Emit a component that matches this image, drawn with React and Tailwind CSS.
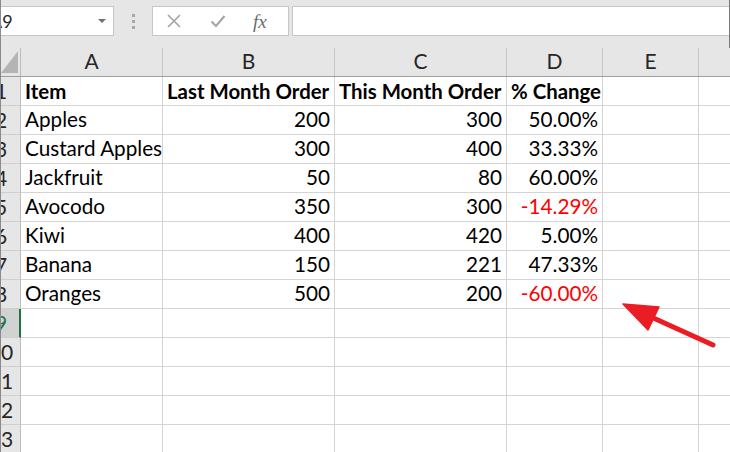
import React from "react";

const rows = [
  ["Item", "Last Month Order", "This Month Order", "% Change", true],
  ["Apples", "200", "300", "50.00%"],
  ["Custard Apples", "300", "400", "33.33%"],
  ["Jackfruit", "50", "80", "60.00%"],
  ["Avocodo", "350", "300", "-14.29%"],
  ["Kiwi", "400", "420", "5.00%"],
  ["Banana", "150", "221", "47.33%"],
  ["Oranges", "500", "200", "-60.00%"],
];

const cols = ["A", "B", "C", "D", "E", ""];

function RowHead({ n, active }) {
  return (
    <div
      className={
        "flex h-[29px] overflow-hidden items-end pb-[4px] border-b border-[#cfcfcf] text-[21px] " +
        (active
          ? "bg-[#d2d2d2] text-[#217346] border-r-2 border-r-[#217346]"
          : "bg-[#e6e6e6] text-[#262626] border-r border-r-[#bdbdbd]")
      }
    >
      <div className="flex-none w-[40px] -ml-[20px] text-center leading-none">{n}</div>
    </div>
  );
}

function Cell({ children, right, bold, red, last }) {
  return (
    <div
      className={
        "flex h-[29px] items-end pb-[4px] px-[4px] leading-none whitespace-nowrap overflow-visible border-b border-[#d4d4d4] " +
        (last ? "" : "border-r ") +
        (right ? "justify-end " : "justify-start ") +
        (bold ? "font-bold text-[20.4px] " : "text-[20.7px] ") +
        (red ? "text-[#ff0000]" : "text-black")
      }
    >
      {children}
    </div>
  );
}

export default function App() {
  const gridCols = "grid grid-cols-[20px_142px_172px_172px_96px_96px_1fr]";
  return (
    <div
      className="relative w-[730px] h-[452px] overflow-hidden bg-white border-l border-[#8a8a8a] text-[21px]"
      style={{ fontFamily: "Lato, 'Open Sans', sans-serif" }}
    >
      {/* Top formula bar */}
      <div className="flex h-[48px] bg-[#e6e6e6] border-r border-[#7a7a7a] pt-[6px] items-start">
        <div className="flex w-[113px] h-[30px] bg-white border border-[#c6c6c6] border-l-0 items-center overflow-hidden">
          <span className="flex-none -ml-[11px] text-[18px] text-[#262626] leading-none">A9</span>
          <div className="flex-1" />
          <svg width="8" height="4" viewBox="0 0 8 4" className="mr-[7px]">
            <path d="M0 0 L8 0 L4 4 Z" fill="#707070" />
          </svg>
        </div>
        <div className="flex flex-col w-[38px] items-center gap-[3px] pt-[8px]">
          <div className="w-[3px] h-[3px] bg-[#a8a8a8]" />
          <div className="w-[3px] h-[3px] bg-[#a8a8a8]" />
          <div className="w-[3px] h-[3px] bg-[#a8a8a8]" />
        </div>
        <div className="flex w-[137px] h-[30px] bg-white border border-[#c6c6c6] items-center">
          <svg width="16" height="16" viewBox="0 0 16 16" className="ml-[13px]">
            <path d="M2 2 L14 14 M14 2 L2 14" stroke="#a3a3a3" strokeWidth="1.6" fill="none" />
          </svg>
          <svg width="16" height="14" viewBox="0 0 16 14" className="ml-[28px]">
            <path d="M1.5 7.5 L6 12 L14.5 2" stroke="#a3a3a3" strokeWidth="2" fill="none" />
          </svg>
          <span
            className="ml-[27px] text-[19px] italic text-[#6a6a6a] leading-none"
            style={{ fontFamily: "'Liberation Serif', serif" }}
          >
            fx
          </span>
        </div>
        <div className="flex-1 h-[30px] ml-[3px] bg-white border border-[#c6c6c6] border-r-0" />
      </div>

      {/* Column headers */}
      <div className={gridCols + " h-[29px] bg-[#e6e6e6] border-b border-[#9d9d9d]"}>
        <div className="relative border-r border-[#bdbdbd] overflow-hidden">
          <svg width="17" height="22" viewBox="0 0 17 22" className="mt-[3px] ml-[0px]">
            <path d="M17 0 L17 22 L0 22 Z" fill="#b4b4b4" />
          </svg>
        </div>
        {cols.map((c, i) => (
          <div
            key={i}
            className={
              "flex items-end justify-center pb-[5px] leading-none text-[#262626] " +
              (i < cols.length - 1 ? "border-r border-[#c6c6c6]" : "")
            }
          >
            {c}
          </div>
        ))}
      </div>

      {/* Data rows */}
      {Array.from({ length: 13 }).map((_, r) => {
        const d = rows[r];
        const bold = d && d[4];
        return (
          <div key={r} className={gridCols}>
            <RowHead n={r + 1} active={r === 8} />
            <Cell bold={bold}>{d ? d[0] : ""}</Cell>
            <Cell bold={bold} right={!bold}>{d ? d[1] : ""}</Cell>
            <Cell bold={bold} right={!bold}>{d ? d[2] : ""}</Cell>
            <Cell bold={bold} right={!bold} red={d && !bold && d[3].startsWith("-")}>
              {d ? d[3] : ""}
            </Cell>
            <Cell />
            <Cell last />
          </div>
        );
      })}

      {/* Red arrow annotation */}
      <svg className="absolute left-0 top-0 pointer-events-none" width="730" height="452" viewBox="0 0 730 452">
        <line x1="712" y1="345" x2="648" y2="316" stroke="#ec1c24" strokeWidth="5" strokeLinecap="round" />
        <path d="M622 304 L658 307 L647 330 Z" fill="#ec1c24" stroke="#ec1c24" strokeWidth="1.5" strokeLinejoin="round" />
      </svg>
    </div>
  );
}
